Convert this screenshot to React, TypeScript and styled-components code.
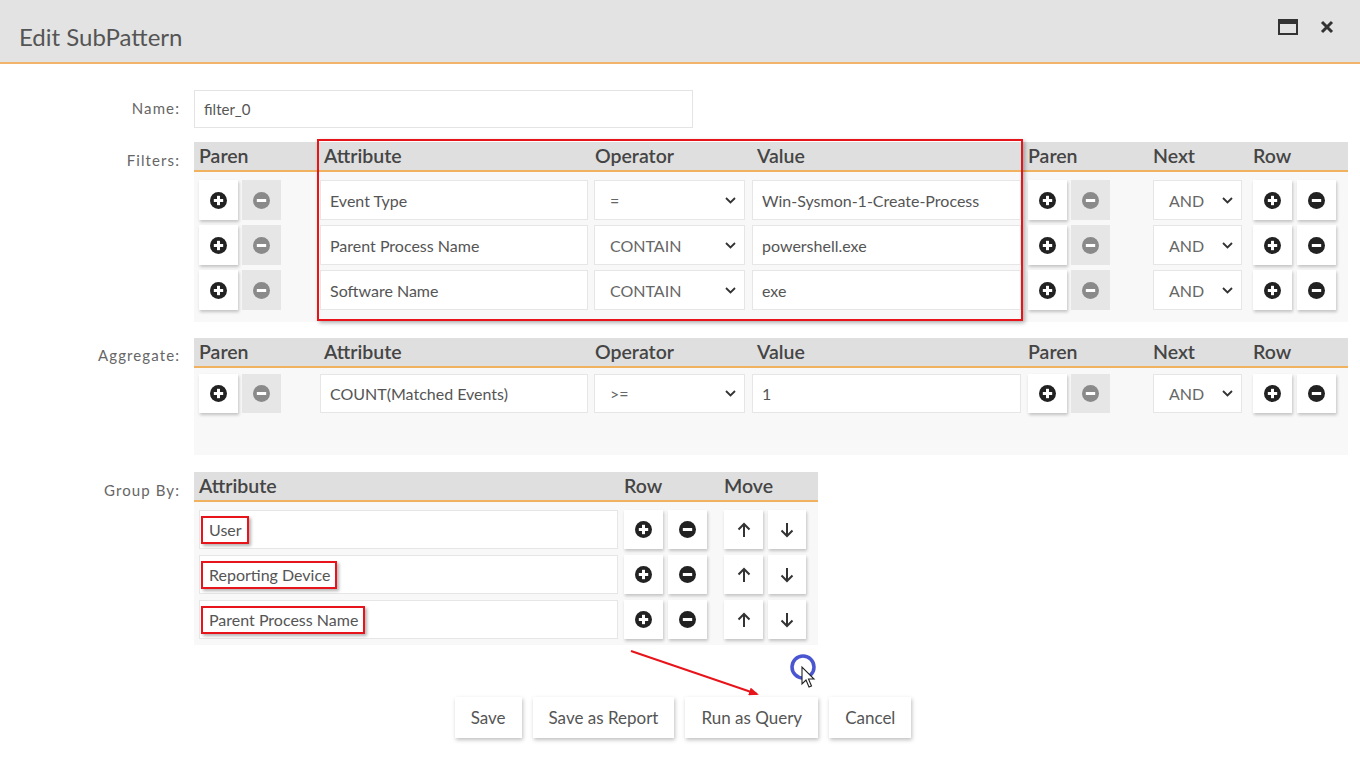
import React from "react";
import styled, { createGlobalStyle } from "styled-components";

const Global = createGlobalStyle`
  html, body { margin: 0; padding: 0; background: #fff; }
  body { font-family: Lato, "Open Sans", "Liberation Sans", sans-serif; color: #555; }
  * { box-sizing: border-box; }
`;

const Page = styled.div`
  position: relative;
  width: 1360px;
  height: 759px;
  overflow: hidden;
  background: #fff;
`;

const TitleBar = styled.div`
  height: 64px;
  background: #e3e3e3;
  border-bottom: 2px solid #f1b46a;
  display: flex;
  align-items: center;
  justify-content: space-between;
  padding: 0 26px 4px 19px;
`;

const Title = styled.div`
  font-size: 24px;
  color: #555;
  padding-top: 14px;
`;

const TitleTools = styled.div`
  display: flex;
  align-items: center;
  gap: 22px;
  padding-bottom: 4px;
`;

const Body = styled.div`
  padding: 26px 0 0 0;
  display: flex;
  flex-direction: column;
`;

const FormRow = styled.div<{ $mt?: number }>`
  display: grid;
  grid-template-columns: 180px auto;
  column-gap: 14px;
  margin-top: ${(p) => p.$mt ?? 0}px;
  align-items: start;
`;

const Label = styled.div<{ $pt?: number }>`
  text-align: right;
  font-size: 15px;
  letter-spacing: 1.1px;
  color: #666;
  padding-top: ${(p) => p.$pt ?? 9}px;
`;

const NameInput = styled.div`
  width: 499px;
  height: 38px;
  border: 1px solid #e4e4e4;
  background: #fff;
  display: flex;
  align-items: center;
  padding-left: 9px;
  font-size: 15px;
  color: #555;
`;

const Table = styled.div<{ $w: number; $bodyH: number }>`
  position: relative;
  width: ${(p) => p.$w}px;
  background: #f8f8f8;
  min-height: ${(p) => p.$bodyH}px;
`;

const HeaderRow = styled.div<{ $cols: string; $h: number }>`
  display: grid;
  grid-template-columns: ${(p) => p.$cols};
  height: ${(p) => p.$h}px;
  background: #dfdfdf;
  border-bottom: 2px solid #f0b25f;
  align-items: center;
`;

const HeadCell = styled.div<{ $pl?: number }>`
  font-size: 19.5px;
  font-weight: 600;
  color: #454545;
  padding-left: ${(p) => p.$pl ?? 0}px;
  padding-bottom: 1px;
`;

const Rows = styled.div<{ $pt: number; $gap: number }>`
  display: flex;
  flex-direction: column;
  gap: ${(p) => p.$gap}px;
  padding-top: ${(p) => p.$pt}px;
`;

const DataRow = styled.div<{ $cols: string; $h: number }>`
  display: grid;
  grid-template-columns: ${(p) => p.$cols};
  height: ${(p) => p.$h}px;
  align-items: stretch;
`;

const Cell = styled.div<{ $pl?: number; $gap?: number }>`
  display: flex;
  gap: ${(p) => p.$gap ?? 4}px;
  padding-left: ${(p) => p.$pl ?? 0}px;
`;

const Field = styled.div<{ $w: number; $pl?: number }>`
  width: ${(p) => p.$w}px;
  background: #fff;
  border: 1px solid #e6e6e6;
  display: flex;
  align-items: center;
  padding-left: ${(p) => p.$pl ?? 9}px;
  font-size: 16px;
  color: #555;
  white-space: nowrap;
`;

const SelectBox = styled(Field)`
  justify-content: space-between;
  padding-right: 8px;
  color: #666;
`;

const IconBtn = styled.div<{ $disabled?: boolean; $w?: number }>`
  width: ${(p) => p.$w ?? 39}px;
  display: flex;
  align-items: center;
  justify-content: center;
  background: ${(p) => (p.$disabled ? "#e6e6e6" : "#fff")};
  box-shadow: ${(p) => (p.$disabled ? "none" : "1px 2px 3px rgba(0,0,0,0.22)")};
`;

const Highlight = styled.span`
  display: inline-block;
  border: 2px solid #e8141b;
  padding: 1px 5px 2px 6px;
  margin-left: -8px;
  box-shadow: 2px 2px 3px rgba(0, 0, 0, 0.3);
  line-height: 21px;
`;

const RedFrame = styled.div`
  position: absolute;
  left: 123px;
  top: -3px;
  width: 706px;
  height: 182px;
  border: 2px solid #e8141b;
  box-shadow: 2px 2px 4px rgba(0, 0, 0, 0.3);
  pointer-events: none;
`;

const Footer = styled.div`
  display: flex;
  justify-content: center;
  gap: 11px;
  margin-top: 52px;
  padding-left: 6px;
`;

const FootBtn = styled.div`
  height: 41px;
  padding: 0 16px;
  display: flex;
  align-items: center;
  background: #fff;
  font-size: 17px;
  color: #555;
  box-shadow: 1px 2px 4px rgba(0, 0, 0, 0.25);
`;

const Overlay = styled.svg`
  position: absolute;
  left: 0;
  top: 0;
  pointer-events: none;
`;

const PlusIcon = ({ color = "#222" }: { color?: string }) => (
  <svg width="17" height="17" viewBox="0 0 16 16">
    <circle cx="8" cy="8" r="8" fill={color} />
    <rect x="3.6" y="6.6" width="8.8" height="2.8" fill="#fff" />
    <rect x="6.6" y="3.6" width="2.8" height="8.8" fill="#fff" />
  </svg>
);

const MinusIcon = ({ color = "#222" }: { color?: string }) => (
  <svg width="17" height="17" viewBox="0 0 16 16">
    <circle cx="8" cy="8" r="8" fill={color} />
    <rect x="3.6" y="6.6" width="8.8" height="2.8" fill="#fff" />
  </svg>
);

const Chevron = () => (
  <svg width="11" height="7" viewBox="0 0 11 7">
    <path d="M1 1 L5.5 5.5 L10 1" stroke="#333" strokeWidth="1.8" fill="none" />
  </svg>
);

const ArrowIcon = ({ down }: { down?: boolean }) => (
  <svg width="14" height="16" viewBox="0 0 14 16" style={down ? { transform: "rotate(180deg)" } : undefined}>
    <path d="M7 15 V2 M1.5 7.5 L7 2 L12.5 7.5" stroke="#333" strokeWidth="2" fill="none" />
  </svg>
);

const ParenButtons = ({ pl }: { pl?: number }) => (
  <Cell $pl={pl} $gap={4}>
    <IconBtn>
      <PlusIcon />
    </IconBtn>
    <IconBtn $disabled>
      <MinusIcon color="#8a8a8a" />
    </IconBtn>
  </Cell>
);

const RowButtons = ({ w = 39, gap = 5 }: { w?: number; gap?: number }) => (
  <Cell $gap={gap}>
    <IconBtn $w={w}>
      <PlusIcon />
    </IconBtn>
    <IconBtn $w={w}>
      <MinusIcon />
    </IconBtn>
  </Cell>
);

const FILTER_COLS = "126px 274px 158px 276px 125px 100px 95px";

const filters = [
  { attr: "Event Type", op: "=", val: "Win-Sysmon-1-Create-Process" },
  { attr: "Parent Process Name", op: "CONTAIN", val: "powershell.exe" },
  { attr: "Software Name", op: "CONTAIN", val: "exe" },
];

const FilterHeader = () => (
  <HeaderRow $cols={FILTER_COLS} $h={30}>
    <HeadCell $pl={5}>Paren</HeadCell>
    <HeadCell $pl={4}>Attribute</HeadCell>
    <HeadCell $pl={1}>Operator</HeadCell>
    <HeadCell $pl={5}>Value</HeadCell>
    <HeadCell>Paren</HeadCell>
    <HeadCell>Next</HeadCell>
    <HeadCell>Row</HeadCell>
  </HeaderRow>
);

const FilterRow = ({ attr, op, val }: { attr: string; op: string; val: string }) => (
  <DataRow $cols={FILTER_COLS} $h={40}>
    <ParenButtons pl={5} />
    <Cell>
      <Field $w={268}>{attr}</Field>
    </Cell>
    <Cell>
      <SelectBox $w={151} $pl={15}>
        <span>{op}</span>
        <Chevron />
      </SelectBox>
    </Cell>
    <Cell>
      <Field $w={269}>{val}</Field>
    </Cell>
    <ParenButtons />
    <Cell>
      <SelectBox $w={89} $pl={15}>
        <span>AND</span>
        <Chevron />
      </SelectBox>
    </Cell>
    <RowButtons />
  </DataRow>
);

const GROUP_COLS = "430px 100px 94px";
const groups = ["User", "Reporting Device", "Parent Process Name"];

export default function App() {
  return (
    <Page>
      <Global />
      <TitleBar>
        <Title>Edit SubPattern</Title>
        <TitleTools>
          <svg width="20" height="16" viewBox="0 0 20 16">
            <rect x="1" y="1" width="18" height="14" fill="none" stroke="#333" strokeWidth="2" />
            <rect x="1" y="1" width="18" height="4" fill="#333" />
          </svg>
          <svg width="14" height="14" viewBox="0 0 14 14">
            <path d="M2 2 L12 12 M12 2 L2 12" stroke="#333" strokeWidth="3" />
          </svg>
        </TitleTools>
      </TitleBar>
      <Body>
        <FormRow>
          <Label>Name:</Label>
          <NameInput>filter_0</NameInput>
        </FormRow>

        <FormRow $mt={14}>
          <Label $pt={9}>Filters:</Label>
          <Table $w={1154} $bodyH={180}>
            <FilterHeader />
            <Rows $pt={8} $gap={5}>
              {filters.map((f) => (
                <FilterRow key={f.attr} {...f} />
              ))}
            </Rows>
            <RedFrame />
          </Table>
        </FormRow>

        <FormRow $mt={16}>
          <Label $pt={8}>Aggregate:</Label>
          <Table $w={1154} $bodyH={117}>
            <FilterHeader />
            <Rows $pt={6} $gap={5}>
              <DataRow $cols={FILTER_COLS} $h={39}>
                <ParenButtons pl={5} />
                <Cell>
                  <Field $w={268}>COUNT(Matched Events)</Field>
                </Cell>
                <Cell>
                  <SelectBox $w={151} $pl={15}>
                    <span>&gt;=</span>
                    <Chevron />
                  </SelectBox>
                </Cell>
                <Cell>
                  <Field $w={269}>1</Field>
                </Cell>
                <ParenButtons />
                <Cell>
                  <SelectBox $w={89} $pl={15}>
                    <span>AND</span>
                    <Chevron />
                  </SelectBox>
                </Cell>
                <RowButtons />
              </DataRow>
            </Rows>
          </Table>
        </FormRow>

        <FormRow $mt={17}>
          <Label $pt={9}>Group By:</Label>
          <Table $w={624} $bodyH={173}>
            <HeaderRow $cols={GROUP_COLS} $h={30}>
              <HeadCell $pl={5}>Attribute</HeadCell>
              <HeadCell>Row</HeadCell>
              <HeadCell>Move</HeadCell>
            </HeaderRow>
            <Rows $pt={8} $gap={6}>
              {groups.map((g) => (
                <DataRow key={g} $cols={GROUP_COLS} $h={39}>
                  <Cell $pl={5}>
                    <Field $w={419}>
                      <Highlight>{g}</Highlight>
                    </Field>
                  </Cell>
                  <RowButtons w={39} gap={5} />
                  <Cell $gap={5}>
                    <IconBtn $w={39}>
                      <ArrowIcon />
                    </IconBtn>
                    <IconBtn $w={38}>
                      <ArrowIcon down />
                    </IconBtn>
                  </Cell>
                </DataRow>
              ))}
            </Rows>
          </Table>
        </FormRow>

        <Footer>
          <FootBtn>Save</FootBtn>
          <FootBtn>Save as Report</FootBtn>
          <FootBtn>Run as Query</FootBtn>
          <FootBtn>Cancel</FootBtn>
        </Footer>
      </Body>

      <Overlay width="1360" height="759" viewBox="0 0 1360 759">
        <defs>
          <marker id="ah" markerWidth="10" markerHeight="8" refX="8" refY="4" orient="auto" markerUnits="userSpaceOnUse">
            <path d="M0 0 L10 4 L0 8 Z" fill="#e8141b" />
          </marker>
        </defs>
        <line x1="631" y1="651" x2="757" y2="694" stroke="#e8141b" strokeWidth="2" markerEnd="url(#ah)" />
        <circle cx="803" cy="667" r="11" fill="none" stroke="#4a55d0" strokeWidth="3.5" />
        <path
          d="M802 667 L802 684 L806 680 L809 687 L811.5 686 L808.5 679 L814 679 Z"
          fill="#fff"
          stroke="#222"
          strokeWidth="1.1"
        />
      </Overlay>
    </Page>
  );
}
